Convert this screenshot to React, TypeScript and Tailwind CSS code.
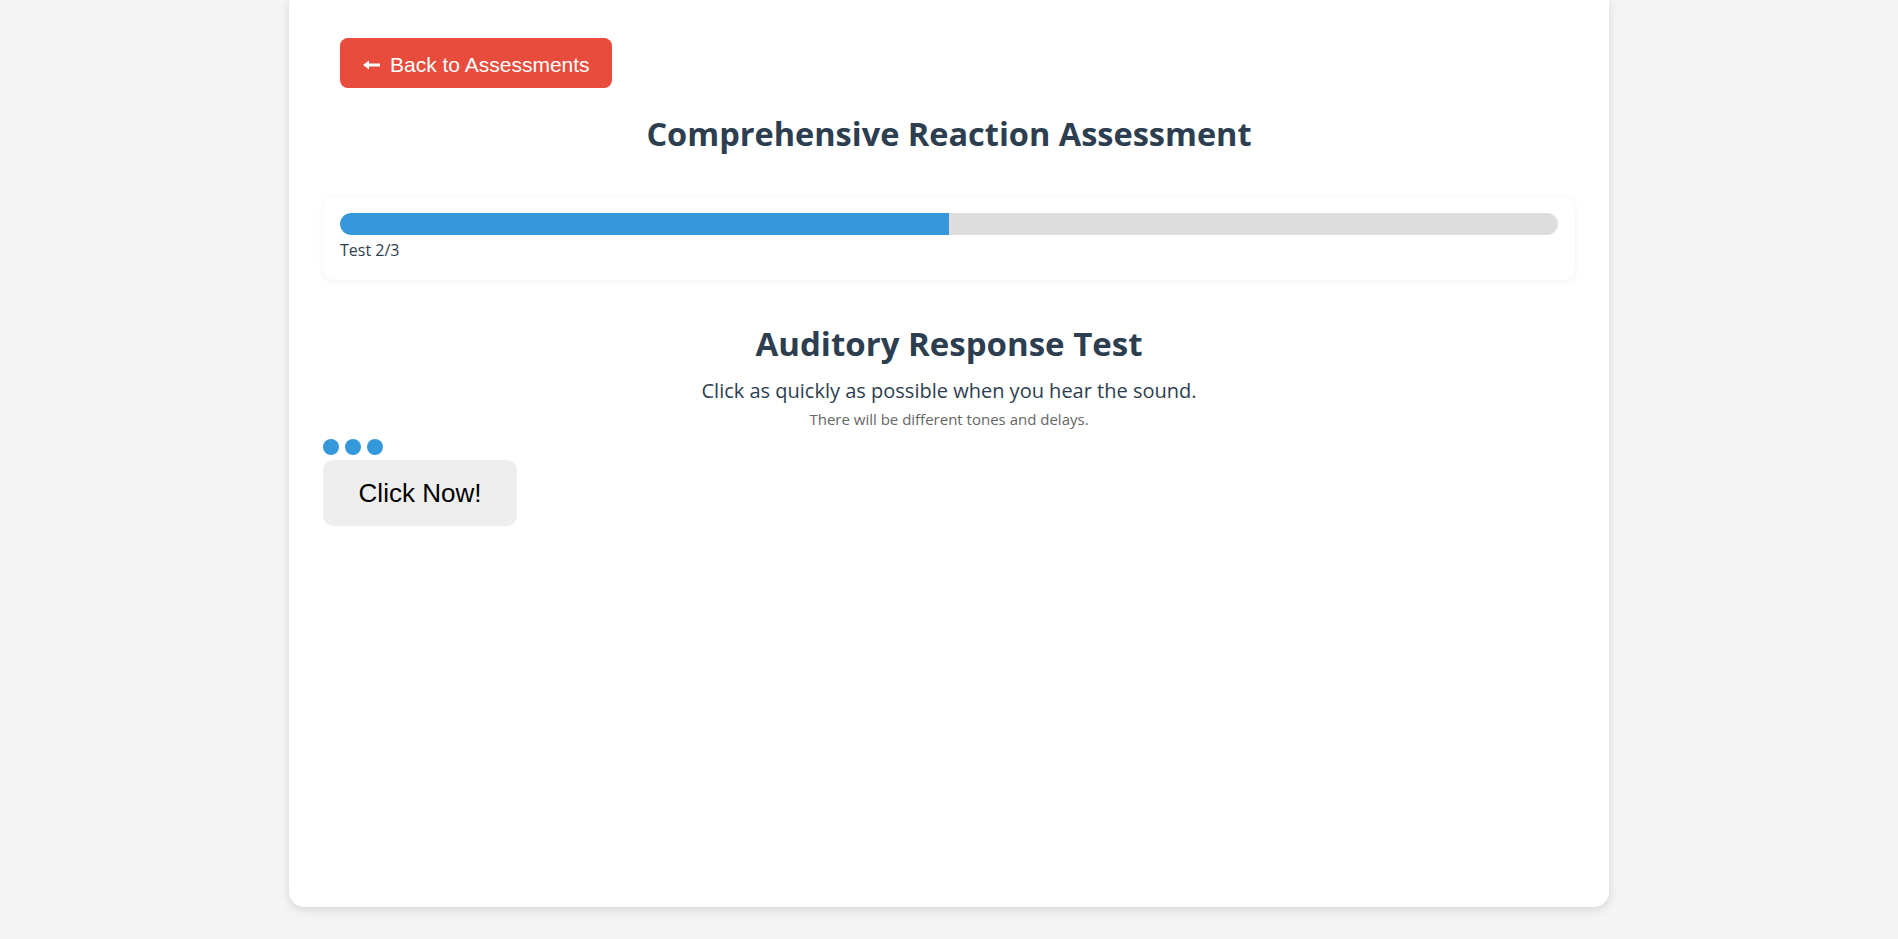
import React from "react";

const headingFont = { fontFamily: '"Open Sans", "Noto Sans", sans-serif' };

const App = () => {
  const progress = 50;

  return (
    <div className="min-h-[939px] w-full bg-[#f4f4f4]">
      <div
        className="mx-auto flex h-[907px] w-[1320px] flex-col rounded-b-[15px] bg-white px-[34px] shadow-[0_3px_10px_rgba(0,0,0,0.12)]"
        style={headingFont}
      >
        {/* Back button */}
        <div className="mt-[38px] pl-[17px]">
          <button
            className="flex h-[50px] w-[272px] items-center gap-[10px] rounded-[8px] bg-[#e74c3c] pl-[23px] pt-[3px] text-[21px] text-white"
            style={{ fontFamily: '"Liberation Sans", Arial, sans-serif' }}
          >
            <svg width="17" height="10" viewBox="0 0 17 10" className="shrink-0">
              <rect x="5" y="3.5" width="12" height="3" fill="white" />
              <path d="M0 5 L6 0.5 L6 9.5 Z" fill="white" />
            </svg>
            <span>Back to Assessments</span>
          </button>
        </div>

        <h1 className="mt-[27px] text-center text-[32.5px] font-bold leading-[38px] text-[#2c3e50]">
          Comprehensive Reaction Assessment
        </h1>

        {/* Progress */}
        <div className="mt-[44px] rounded-[12px] bg-white px-[17px] pb-[18px] pt-[16px] shadow-[0_1px_6px_rgba(0,0,0,0.06)]">
          <div className="h-[22px] w-full overflow-hidden rounded-full bg-[#dddddd]">
            <div className="h-full rounded-l-full bg-[#3498db]" style={{ width: `${progress}%` }} />
          </div>
          <p className="mt-[3px] text-[16px] leading-[24px] text-[#2c3e50]">Test 2/3</p>
        </div>

        {/* Test area */}
        <h2 className="mt-[46px] text-center text-[33px] font-bold leading-[35px] text-[#2c3e50]">
          Auditory Response Test
        </h2>
        <p className="mt-[16px] text-center text-[20px] leading-[27px] text-[#2c3e50]">
          Click as quickly as possible when you hear the sound.
        </p>
        <p className="mt-[5px] text-center text-[15px] leading-[20px] text-[#666666]">
          There will be different tones and delays.
        </p>

        <div className="mt-[10px] flex gap-[6px]">
          <span className="h-[16px] w-[16px] rounded-full bg-[#3498db]" />
          <span className="h-[16px] w-[16px] rounded-full bg-[#3498db]" />
          <span className="h-[16px] w-[16px] rounded-full bg-[#3498db]" />
        </div>

        <div className="mt-[5px]">
          <button
            className="h-[66px] w-[194px] rounded-[10px] bg-[#eeeeee] text-[26px] text-black"
            style={{ fontFamily: '"Liberation Sans", Arial, sans-serif' }}
          >
            Click Now!
          </button>
        </div>
      </div>
    </div>
  );
};

export default App;
